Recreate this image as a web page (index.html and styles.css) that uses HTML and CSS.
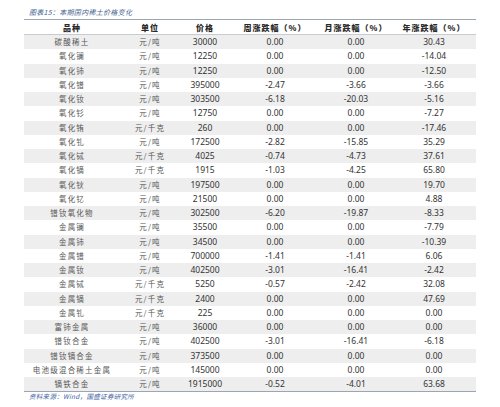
FILE: index.html
```html
<!DOCTYPE html>
<html lang="zh">
<head>
<meta charset="utf-8">
<link rel="stylesheet" href="styles.css">
</head>
<body>
<div class="page">
  <div class="title">图表15：本期国内稀土价格变化</div>
  <table class="tbl">
    <colgroup>
      <col class="c1"><col class="c2"><col class="c3"><col class="c4"><col class="c5"><col class="c6">
    </colgroup>
    <thead>
      <tr><th>品种</th><th>单位</th><th>价格</th><th>周涨跌幅（%）</th><th>月涨跌幅（%）</th><th>年涨跌幅（%）</th></tr>
    </thead>
    <tbody>
      <tr><td class="cn">碳酸稀土</td><td class="cn">元/吨</td><td>30000</td><td>0.00</td><td>0.00</td><td>30.43</td></tr>
      <tr><td class="cn">氧化镧</td><td class="cn">元/吨</td><td>12250</td><td>0.00</td><td>0.00</td><td>-14.04</td></tr>
      <tr><td class="cn">氧化铈</td><td class="cn">元/吨</td><td>12250</td><td>0.00</td><td>0.00</td><td>-12.50</td></tr>
      <tr><td class="cn">氧化镨</td><td class="cn">元/吨</td><td>395000</td><td>-2.47</td><td>-3.66</td><td>-3.66</td></tr>
      <tr><td class="cn">氧化钕</td><td class="cn">元/吨</td><td>303500</td><td>-6.18</td><td>-20.03</td><td>-5.16</td></tr>
      <tr><td class="cn">氧化钐</td><td class="cn">元/吨</td><td>12750</td><td>0.00</td><td>0.00</td><td>-7.27</td></tr>
      <tr><td class="cn">氧化铕</td><td class="cn">元/千克</td><td>260</td><td>0.00</td><td>0.00</td><td>-17.46</td></tr>
      <tr><td class="cn">氧化钆</td><td class="cn">元/吨</td><td>172500</td><td>-2.82</td><td>-15.85</td><td>35.29</td></tr>
      <tr><td class="cn">氧化铽</td><td class="cn">元/千克</td><td>4025</td><td>-0.74</td><td>-4.73</td><td>37.61</td></tr>
      <tr><td class="cn">氧化镝</td><td class="cn">元/千克</td><td>1915</td><td>-1.03</td><td>-4.25</td><td>65.80</td></tr>
      <tr><td class="cn">氧化钬</td><td class="cn">元/吨</td><td>197500</td><td>0.00</td><td>0.00</td><td>19.70</td></tr>
      <tr><td class="cn">氧化钇</td><td class="cn">元/吨</td><td>21500</td><td>0.00</td><td>0.00</td><td>4.88</td></tr>
      <tr><td class="cn">镨钕氧化物</td><td class="cn">元/吨</td><td>302500</td><td>-6.20</td><td>-19.87</td><td>-8.33</td></tr>
      <tr><td class="cn">金属镧</td><td class="cn">元/吨</td><td>35500</td><td>0.00</td><td>0.00</td><td>-7.79</td></tr>
      <tr><td class="cn">金属铈</td><td class="cn">元/吨</td><td>34500</td><td>0.00</td><td>0.00</td><td>-10.39</td></tr>
      <tr><td class="cn">金属镨</td><td class="cn">元/吨</td><td>700000</td><td>-1.41</td><td>-1.41</td><td>6.06</td></tr>
      <tr><td class="cn">金属钕</td><td class="cn">元/吨</td><td>402500</td><td>-3.01</td><td>-16.41</td><td>-2.42</td></tr>
      <tr><td class="cn">金属铽</td><td class="cn">元/千克</td><td>5250</td><td>-0.57</td><td>-2.42</td><td>32.08</td></tr>
      <tr><td class="cn">金属镝</td><td class="cn">元/千克</td><td>2400</td><td>0.00</td><td>0.00</td><td>47.69</td></tr>
      <tr><td class="cn">金属钆</td><td class="cn">元/千克</td><td>225</td><td>0.00</td><td>0.00</td><td>0.00</td></tr>
      <tr><td class="cn">富铈金属</td><td class="cn">元/吨</td><td>36000</td><td>0.00</td><td>0.00</td><td>0.00</td></tr>
      <tr><td class="cn">镨钕合金</td><td class="cn">元/吨</td><td>402500</td><td>-3.01</td><td>-16.41</td><td>-6.18</td></tr>
      <tr><td class="cn">镨钕镝合金</td><td class="cn">元/吨</td><td>373500</td><td>0.00</td><td>0.00</td><td>0.00</td></tr>
      <tr><td class="cn">电池级混合稀土金属</td><td class="cn">元/吨</td><td>145000</td><td>0.00</td><td>0.00</td><td>0.00</td></tr>
      <tr><td class="cn">镝铁合金</td><td class="cn">元/吨</td><td>1915000</td><td>-0.52</td><td>-4.01</td><td>63.68</td></tr>
    </tbody>
  </table>
  <div class="source">资料来源：Wind，国盛证券研究所</div>
</div>
</body>
</html>
```

FILE: styles.css
```css
html, body {
  margin: 0;
  padding: 0;
  background: #ffffff;
}
.page {
  width: 500px;
  height: 407px;
  padding: 6px 24px 0 24px;
  box-sizing: border-box;
  font-family: "Noto Sans", "Noto Sans CJK SC", sans-serif;
}
.title {
  font-family: "Noto Sans CJK SC", sans-serif;
  font-size: 7px;
  line-height: 12px;
  height: 13px;
  padding-left: 5px;
  color: #3f5f8f;
  font-style: italic;
  letter-spacing: 0.3px;
}
.tbl {
  width: 452px;
  border-collapse: collapse;
  table-layout: fixed;
  border-top: 1px solid #9aa6b4;
  border-bottom: 1px solid #9aa6b4;
}
.c1 { width: 96px; }
.c2 { width: 60px; }
.c3 { width: 50px; }
.c4 { width: 90px; }
.c5 { width: 72px; }
.c6 { width: 84px; }
.tbl th {
  height: 14px;
  padding: 0;
  font-family: "Noto Sans CJK SC", sans-serif;
  font-size: 8px;
  font-weight: 900;
  color: #2a2a2a;
  text-align: center;
  letter-spacing: 1px;
  border-bottom: 1px solid #c8ccd2;
}
.tbl td {
  height: 14.25px;
  padding: 0;
  font-size: 8.5px;
  line-height: 14px;
  color: #333333;
  text-align: center;
  white-space: nowrap;
}
.tbl td.cn {
  font-family: "Noto Sans CJK SC", sans-serif;
  font-size: 7.5px;
  letter-spacing: 1.2px;
  color: #555555;
}
.tbl tbody tr:nth-child(odd) td {
  background: #eeeeee;
}
.source {
  font-family: "Noto Sans CJK SC", sans-serif;
  font-size: 6.5px;
  line-height: 8px;
  padding-left: 5px;
  margin-top: 0;
  color: #3f5f9f;
  font-style: italic;
  letter-spacing: 0.3px;
}
```
